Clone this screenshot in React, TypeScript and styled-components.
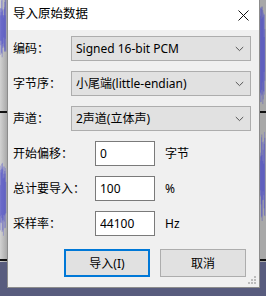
import React from "react";
import styled, { createGlobalStyle } from "styled-components";

const Global = createGlobalStyle`
  html, body { margin: 0; padding: 0; }
  body { width: 266px; height: 296px; overflow: hidden; background: #585c7e; }
  * { box-sizing: border-box; }
`;

const FONT = `"Noto Sans", "Noto Sans CJK SC", sans-serif`;

const Page = styled.div`
  position: relative;
  width: 266px;
  height: 296px;
  overflow: hidden;
  font-family: ${FONT};
  font-size: 12px;
  color: #000;
`;

const Backdrop = styled.svg`
  position: absolute;
  inset: 0;
`;

const Dialog = styled.div`
  position: relative;
  margin-left: 7px;
  width: 253px;
  height: 288px;
  border: 1px solid #8c8c8c;
  border-top: none;
  background: #f0f0f0;
  display: flex;
  flex-direction: column;
`;

const TitleBar = styled.div`
  height: 30px;
  background: #ffffff;
  display: flex;
  align-items: center;
  justify-content: space-between;
  padding-left: 5px;
  padding-right: 10px;
`;

const Title = styled.span`
  font-size: 12.5px;
  line-height: 1;
  margin-top: -1px;
`;

const CloseIcon = styled.svg`
  display: block;
  margin-top: 1px;
`;

const Body = styled.div`
  flex: 1;
  position: relative;
  display: flex;
  flex-direction: column;
  padding: 6px 8px 10px 5px;
`;

const Rows = styled.div`
  display: flex;
  flex-direction: column;
  gap: 10px;
`;

const Row = styled.div<{ $label: number }>`
  display: grid;
  grid-template-columns: ${(p) => p.$label}px max-content max-content;
  justify-content: start;
  align-items: center;
  height: 25px;
`;

const Label = styled.span`
  white-space: nowrap;
  line-height: 1;
`;

const Select = styled.div`
  width: 180px;
  height: 25px;
  border: 1px solid #adadad;
  background: #e1e1e1;
  display: flex;
  align-items: center;
  justify-content: space-between;
  padding-left: 4px;
  padding-right: 6px;
  white-space: nowrap;
`;

const SelectText = styled.span`
  line-height: 1;
`;

const Field = styled.input`
  width: 60px;
  height: 25px;
  border: 1px solid #7a7a7a;
  background: #ffffff;
  padding: 0 0 0 4px;
  font-family: ${FONT};
  font-size: 12px;
  color: #000;
  outline: none;
`;

const Unit = styled.span`
  margin-left: 10px;
  line-height: 1;
`;

const Buttons = styled.div`
  display: flex;
  justify-content: flex-end;
  gap: 10px;
  margin-top: 13px;
  padding-right: 5px;
`;

const Button = styled.button<{ $default?: boolean }>`
  width: 86px;
  height: 28px;
  background: #e1e1e1;
  border: ${(p) => (p.$default ? "2px solid #0078d7" : "1px solid #adadad")};
  font-family: ${FONT};
  font-size: 12px;
  color: #000;
  padding: 0;
  display: flex;
  align-items: center;
  justify-content: center;
`;

const Grip = styled.svg`
  position: absolute;
  right: 2px;
  bottom: 2px;
`;

const Chevron = () => (
  <svg width="9" height="6" viewBox="0 0 9 6">
    <path d="M0.8 1 L4.5 4.6 L8.2 1" fill="none" stroke="#555" strokeWidth="1" />
  </svg>
);

// deterministic waveform columns
function wave(x0: number, x1: number, center: number, amp: number, seed: number) {
  const lines: React.ReactNode[] = [];
  let s = seed;
  for (let x = x0; x < x1; x += 1) {
    for (let k = 0; k < 3; k++) {
      s = (s * 9301 + 49297) % 233280;
      const r = s / 233280;
      const a = amp * (0.35 + 0.65 * r);
      s = (s * 9301 + 49297) % 233280;
      const off = (s / 233280 - 0.5) * amp * 0.3;
      lines.push(
        <line
          key={`${seed}-${x}-${k}`}
          x1={x + k / 3 + 0.15}
          x2={x + k / 3 + 0.15}
          y1={center + off - a}
          y2={center + off + a}
          stroke={k === 1 ? "#5a5ad8" : "#3434c4"}
          strokeWidth={0.34}
        />
      );
    }
  }
  return lines;
}

export default function App() {
  return (
    <>
      <Global />
      <Page>
        <Backdrop width="266" height="296" viewBox="0 0 266 296">
          <defs>
            <linearGradient id="lg" x1="0" x2="1" y1="0" y2="0">
              <stop offset="0" stopColor="#d2d2d2" />
              <stop offset="1" stopColor="#a9a9a9" />
            </linearGradient>
          </defs>
          <rect x="0" y="0" width="266" height="262" fill="#c2c2c2" />
          <rect x="0" y="0" width="7" height="262" fill="url(#lg)" />
          <rect x="259" y="0" width="7" height="262" fill="#a8a8a8" />
          <g>{wave(0, 6, 28, 30, 11)}</g>
          <g>{wave(0, 6, 196, 36, 23)}</g>
          <g>{wave(260, 265, 52, 48, 37)}</g>
          <g>{wave(260, 265, 176, 42, 51)}</g>
          <rect x="0" y="111" width="266" height="2" fill="#111" />
          <rect x="0" y="259" width="266" height="2" fill="#111" />
          <rect x="0" y="262" width="266" height="34" fill="#585c7e" />
        </Backdrop>
        <Dialog>
          <TitleBar>
            <Title>导入原始数据</Title>
            <CloseIcon width="11" height="11" viewBox="0 0 11 11">
              <path d="M0.5 0.5 L10.5 10.5 M10.5 0.5 L0.5 10.5" stroke="#111" strokeWidth="1" />
            </CloseIcon>
          </TitleBar>
          <Body>
            <Rows>
              <Row $label={58}>
                <Label>编码：</Label>
                <Select>
                  <SelectText>Signed 16-bit PCM</SelectText>
                  <Chevron />
                </Select>
              </Row>
              <Row $label={58}>
                <Label>字节序：</Label>
                <Select>
                  <SelectText>小尾端(little-endian)</SelectText>
                  <Chevron />
                </Select>
              </Row>
              <Row $label={58}>
                <Label>声道：</Label>
                <Select>
                  <SelectText>2声道(立体声)</SelectText>
                  <Chevron />
                </Select>
              </Row>
              <Row $label={82}>
                <Label>开始偏移：</Label>
                <Field defaultValue="0" />
                <Unit>字节</Unit>
              </Row>
              <Row $label={82}>
                <Label>总计要导入：</Label>
                <Field defaultValue="100" />
                <Unit>%</Unit>
              </Row>
              <Row $label={82}>
                <Label>采样率：</Label>
                <Field defaultValue="44100" />
                <Unit>Hz</Unit>
              </Row>
            </Rows>
            <Buttons>
              <Button $default>导入(I)</Button>
              <Button>取消</Button>
            </Buttons>
            <Grip width="10" height="10" viewBox="0 0 10 10">
              {[
                [7, 1],
                [4, 4],
                [7, 4],
                [1, 7],
                [4, 7],
                [7, 7],
              ].map(([x, y]) => (
                <rect key={`${x}-${y}`} x={x} y={y} width="2" height="2" fill="#bcbcbc" />
              ))}
            </Grip>
          </Body>
        </Dialog>
      </Page>
    </>
  );
}
